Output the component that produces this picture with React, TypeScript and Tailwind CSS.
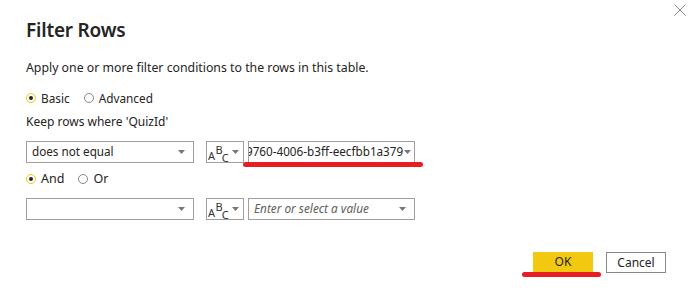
import React from "react"

function Caret({ className = "" }: { className?: string }) {
  return (
    <svg width="7" height="4" viewBox="0 0 7 4" className={className}>
      <path d="M0 0 H7 L3.5 4 Z" fill="#777" />
    </svg>
  )
}

function Radio({ checked, label }: { checked?: boolean; label: string }) {
  return (
    <label className="flex items-center gap-[5px]">
      <span
        className={
          checked
            ? "flex h-[10px] w-[10px] items-center justify-center rounded-full border border-[#f2c811] bg-white"
            : "flex h-[10px] w-[10px] items-center justify-center rounded-full border border-[#8a8886] bg-white"
        }
      >
        {checked && <span className="h-[4px] w-[4px] rounded-full bg-[#252423]" />}
      </span>
      <span>{label}</span>
    </label>
  )
}

function TypeIcon() {
  return (
    <div className="flex h-[22px] w-[38px] items-center border border-[#a19f9d] bg-white pl-[1px]">
      <span className="flex h-[20px] w-[18px] items-center text-[11px] leading-none text-[#333]">
        <span className="mt-[6px]">A</span>
        <span className="mb-[6px] ml-[0.5px]">B</span>
        <span className="ml-[-1px] mt-[10px]">C</span>
      </span>
      <Caret className="ml-[6px]" />
    </div>
  )
}

export default function App() {
  return (
    <div
      className="relative h-[298px] w-[690px] overflow-hidden bg-white text-[#252423]"
      style={{ fontFamily: '"Noto Sans", "Open Sans", sans-serif' }}
    >
      {/* close */}
      <svg width="12" height="12" viewBox="0 0 12 12" className="absolute left-[674px] top-[4px]">
        <path d="M0.5 0.5 L11.5 11.5 M11.5 0.5 L0.5 11.5" stroke="#888" strokeWidth="1" />
      </svg>

      <div className="flex flex-col pl-[26px] pt-[16px]">
        <h1 className="text-[19px] font-semibold leading-[28px] tracking-[-0.2px]">Filter Rows</h1>
        <p className="mt-[15px] text-[12.3px] leading-[18px]">
          Apply one or more filter conditions to the rows in this table.
        </p>

        <div className="mt-[13px] flex items-center gap-[14px] text-[11.8px] leading-[16px]">
          <Radio checked label="Basic" />
          <Radio label="Advanced" />
        </div>

        <p className="mt-[8px] text-[12px] leading-[16px]">Keep rows where 'QuizId'</p>

        {/* row 1 */}
        <div className="mt-[11px] flex items-center text-[11.7px]">
          <div className="flex h-[22px] w-[168px] items-center justify-between border border-[#a19f9d] bg-white pl-[5px] pr-[8px]">
            <span>does not equal</span>
            <Caret />
          </div>
          <div className="ml-[12px]">
            <TypeIcon />
          </div>
          <div className="relative ml-[4px] flex h-[22px] w-[167px] items-center overflow-hidden border border-[#a19f9d] bg-white">
            <span className="ml-[-3px] whitespace-nowrap">9760-4006-b3ff-eecfbb1a379</span>
            <Caret className="ml-[1px]" />
          </div>
        </div>

        <div className="mt-[8px] flex items-center gap-[14px] text-[12.5px] leading-[16px]">
          <Radio checked label="And" />
          <Radio label="Or" />
        </div>

        {/* row 2 */}
        <div className="mt-[11px] flex items-center text-[11.8px]">
          <div className="flex h-[22px] w-[168px] items-center justify-end border border-[#a19f9d] bg-white pr-[8px]">
            <Caret />
          </div>
          <div className="ml-[12px]">
            <TypeIcon />
          </div>
          <div className="ml-[4px] flex h-[22px] w-[167px] items-center justify-between border border-[#a19f9d] bg-white pl-[5px] pr-[8px]">
            <span className="italic text-[#605e5c]">Enter or select a value</span>
            <Caret />
          </div>
        </div>

        {/* buttons */}
        <div className="mt-[32px] flex justify-end gap-[13px] pr-[24px] text-[12px]">
          <button className="h-[20px] w-[60px] bg-[#f2c811] text-[#252423]">OK</button>
          <button className="h-[21px] w-[60px] border border-[#8a8886] bg-white text-[#252423]">Cancel</button>
        </div>
      </div>

      {/* red annotation underlines */}
      <div className="absolute left-[243px] top-[162px] h-[5px] w-[180px] rounded-full bg-[#e61e24]" />
      <div className="absolute left-[522px] top-[272px] h-[5px] w-[79px] rounded-full bg-[#e61e24]" />
    </div>
  )
}
